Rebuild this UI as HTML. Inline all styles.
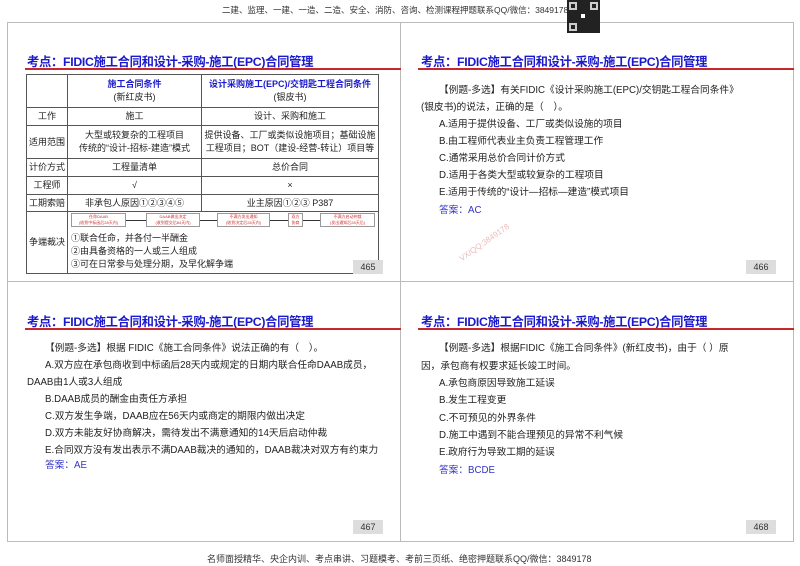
<!DOCTYPE html>
<html><head><meta charset="utf-8"><style>
*{margin:0;padding:0;box-sizing:border-box}
body{width:800px;height:566px;background:#fff;position:relative;overflow:hidden;font-family:"Liberation Sans","Noto Sans CJK SC",sans-serif;color:#222}
.abs{position:absolute}
.slide{position:absolute;border:1px solid #bbb;background:#fff}
.title{position:absolute;font-size:12.3px;font-weight:bold;color:#1a1acc;white-space:nowrap;letter-spacing:-0.3px}
.rl{position:absolute;height:2px;background:#c8282c}
.pn{position:absolute;width:30px;height:14px;background:#ddd;font-size:9px;text-align:center;line-height:14px;color:#333}
.t{position:absolute;font-size:9.7px;white-space:nowrap;color:#222}
.ans{color:#3333cc}
table{border-collapse:collapse;position:absolute;left:26px;top:74px;width:353px;font-size:9px;table-layout:fixed}
td{border:1px solid #555;text-align:center;padding:0;line-height:13px;overflow:hidden;white-space:nowrap}
.hd{color:#1a1acc;font-weight:bold}
.box{position:absolute;border:1px solid #999;height:14px;font-size:4px;color:#c33;text-align:center;line-height:6px;background:#fff;overflow:hidden}
.arr{position:absolute;height:1px;background:#333}
.wm{position:absolute;font-size:8px;color:#e9bcbc;transform:rotate(-35deg);white-space:nowrap}
</style></head><body>
<div class="abs" style="left:222px;top:4px;font-size:8.5px;color:#333;white-space:nowrap">二建、监理、一建、一造、二造、安全、消防、咨询、检测课程押题联系QQ/微信：3849178</div>

<div class="slide" style="left:7px;top:22px;width:394px;height:260px"></div>
<div class="slide" style="left:400px;top:22px;width:394px;height:260px"></div>
<div class="slide" style="left:7px;top:281px;width:394px;height:261px"></div>
<div class="slide" style="left:400px;top:281px;width:394px;height:261px"></div>
<div class="abs" style="left:567px;top:0;width:33px;height:33px;background:#222">
<div class="abs" style="left:2px;top:2px;width:8px;height:8px;border:2px solid #ccc"></div>
<div class="abs" style="right:2px;top:2px;width:8px;height:8px;border:2px solid #ccc"></div>
<div class="abs" style="left:2px;bottom:2px;width:8px;height:8px;border:2px solid #ccc"></div>
<div class="abs" style="left:14px;top:14px;width:4px;height:4px;background:#fff"></div></div>

<!-- slide 465 -->
<div class="title" style="left:27px;top:52px">考点：FIDIC施工合同和设计-采购-施工(EPC)合同管理</div>
<div class="rl" style="left:25px;top:68px;width:376px"></div>
<table>
<colgroup><col style="width:41px"><col style="width:134px"><col></colgroup>
<tr style="height:33px"><td></td><td><span class="hd">施工合同条件</span><br>(新红皮书)</td><td><span class="hd">设计采购施工(EPC)/交钥匙工程合同条件</span><br>(银皮书)</td></tr>
<tr style="height:18px"><td>工作</td><td>施工</td><td>设计、采购和施工</td></tr>
<tr style="height:33px"><td>适用范围</td><td>大型或较复杂的工程项目<br>传统的“设计-招标-建造”模式</td><td>提供设备、工厂或类似设施项目；基础设施<br>工程项目；BOT（建设-经营-转让）项目等</td></tr>
<tr style="height:18px"><td>计价方式</td><td>工程量清单</td><td>总价合同</td></tr>
<tr style="height:18px"><td>工程师</td><td>√</td><td>×</td></tr>
<tr style="height:17px"><td>工期索赔</td><td>非承包人原因①②③④⑤</td><td>业主原因①②③ P387</td></tr>
<tr style="height:62px"><td>争端裁决</td><td colspan="2" style="text-align:left;vertical-align:top;padding-left:3px;padding-top:20px;line-height:13px">①联合任命，并各付一半酬金<br>②由具备资格的一人或三人组成<br>③可在日常参与处理分期，及早化解争端</td></tr>
</table>
<div class="box" style="left:71px;top:213px;width:55px">任命DAAB<br>(收到中标函后28天内)</div>
<div class="arr" style="left:126px;top:220px;width:20px"></div>
<div class="box" style="left:146px;top:213px;width:54px">DAAB做出决定<br>(收到提交后84天内)</div>
<div class="arr" style="left:200px;top:220px;width:17px"></div>
<div class="box" style="left:217px;top:213px;width:53px">不满方发出通知<br>(收到决定后28天内)</div>
<div class="arr" style="left:270px;top:220px;width:18px"></div>
<div class="box" style="left:288px;top:213px;width:15px">双方<br>协商</div>
<div class="arr" style="left:303px;top:220px;width:17px"></div>
<div class="box" style="left:320px;top:213px;width:55px">不满方启动仲裁<br>(发出通知后28天后)</div>
<div class="pn" style="left:353px;top:260px">465</div>

<!-- slide 466 -->
<div class="title" style="left:421px;top:52px">考点：FIDIC施工合同和设计-采购-施工(EPC)合同管理</div>
<div class="rl" style="left:418px;top:68px;width:376px"></div>
<div class="t" style="left:439px;top:82px">【例题-多选】有关FIDIC《设计采购施工(EPC)/交钥匙工程合同条件》</div>
<div class="t" style="left:421px;top:99px">(银皮书)的说法，正确的是（　）。</div>
<div class="t" style="left:439px;top:116px">A.适用于提供设备、工厂或类似设施的项目</div>
<div class="t" style="left:439px;top:133px">B.由工程师代表业主负责工程管理工作</div>
<div class="t" style="left:439px;top:150px">C.通常采用总价合同计价方式</div>
<div class="t" style="left:439px;top:167px">D.适用于各类大型或较复杂的工程项目</div>
<div class="t" style="left:439px;top:184px">E.适用于传统的“设计—招标—建造”模式项目</div>
<div class="t ans" style="left:439px;top:202px">答案：AC</div>
<div class="wm" style="left:455px;top:238px">VX/QQ:3849178</div>
<div class="pn" style="left:746px;top:260px">466</div>

<!-- slide 467 -->
<div class="title" style="left:27px;top:312px">考点：FIDIC施工合同和设计-采购-施工(EPC)合同管理</div>
<div class="rl" style="left:25px;top:328px;width:376px"></div>
<div class="t" style="left:45px;top:340px">【例题-多选】根据 FIDIC《施工合同条件》说法正确的有（　）。</div>
<div class="t" style="left:45px;top:357px">A.双方应在承包商收到中标函后28天内或规定的日期内联合任命DAAB成员，</div>
<div class="t" style="left:27px;top:374px">DAAB由1人或3人组成</div>
<div class="t" style="left:45px;top:391px">B.DAAB成员的酬金由责任方承担</div>
<div class="t" style="left:45px;top:408px">C.双方发生争端，DAAB应在56天内或商定的期限内做出决定</div>
<div class="t" style="left:45px;top:425px">D.双方未能友好协商解决，需待发出不满意通知的14天后启动仲裁</div>
<div class="t" style="left:45px;top:442px">E.合同双方没有发出表示不满DAAB裁决的通知的，DAAB裁决对双方有约束力</div>
<div class="t ans" style="left:45px;top:457px">答案：AE</div>
<div class="pn" style="left:353px;top:520px">467</div>

<!-- slide 468 -->
<div class="title" style="left:421px;top:312px">考点：FIDIC施工合同和设计-采购-施工(EPC)合同管理</div>
<div class="rl" style="left:418px;top:328px;width:376px"></div>
<div class="t" style="left:439px;top:340px">【例题-多选】根据FIDIC《施工合同条件》(新红皮书)，由于（ ）原</div>
<div class="t" style="left:421px;top:358px">因，承包商有权要求延长竣工时间。</div>
<div class="t" style="left:439px;top:375px">A.承包商原因导致施工延误</div>
<div class="t" style="left:439px;top:392px">B.发生工程变更</div>
<div class="t" style="left:439px;top:410px">C.不可预见的外界条件</div>
<div class="t" style="left:439px;top:427px">D.施工中遇到不能合理预见的异常不利气候</div>
<div class="t" style="left:439px;top:444px">E.政府行为导致工期的延误</div>
<div class="t ans" style="left:439px;top:462px">答案：BCDE</div>
<div class="pn" style="left:746px;top:520px">468</div>

<div class="abs" style="left:207px;top:552px;font-size:9px;color:#333;white-space:nowrap">名师面授精华、央企内训、考点串讲、习题模考、考前三页纸、绝密押题联系QQ/微信：3849178</div>
</body></html>
